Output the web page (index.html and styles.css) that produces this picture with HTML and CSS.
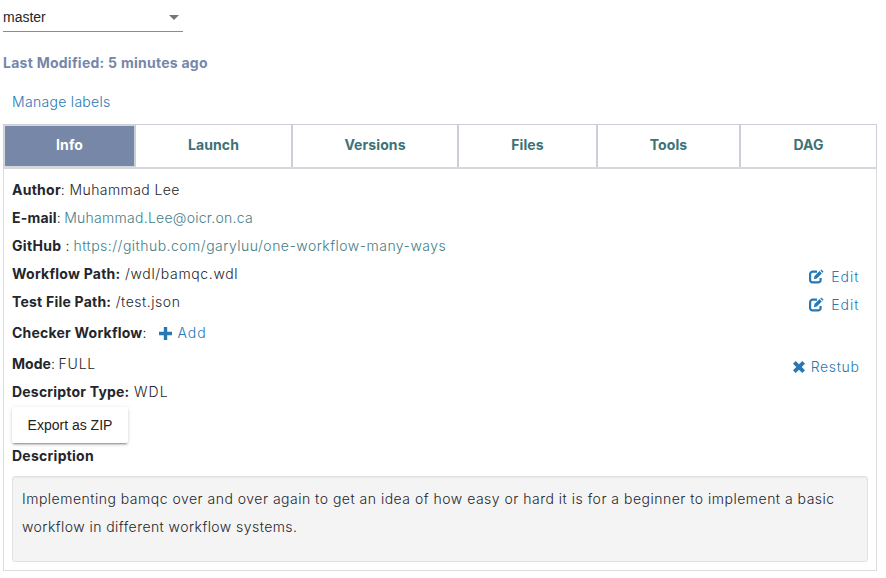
FILE: index.html
```html
<!DOCTYPE html>
<html lang="en">
<head>
<meta charset="utf-8">
<title>Workflow</title>
<link rel="stylesheet" href="styles.css">
</head>
<body>
<div class="select"><span>master</span><i class="caret"></i></div>
<div class="modified"><b class="ls-modified">Last Modified: 5 minutes ago</b></div>
<div class="labels"><a class="blue ls-manage">Manage labels</a></div>
<nav class="tabs">
  <a class="tab active"><b>Info</b></a>
  <a class="tab"><b>Launch</b></a>
  <a class="tab"><b>Versions</b></a>
  <a class="tab"><b>Files</b></a>
  <a class="tab"><b>Tools</b></a>
  <a class="tab"><b>DAG</b></a>
</nav>
<main class="panel">
  <div class="row"><b class="ls-author">Author</b><span class="ls-name">: Muhammad Lee</span></div>
  <div class="row"><b class="ls-email">E-mail</b><span class="colon">: </span><a class="teal ls-address">Muhammad.Lee@oicr.on.ca</a></div>
  <div class="row"><b class="ls-github">GitHub</b><span class="colon-wide"> : </span><a class="teal ls-url">https://github.com/garyluu/one-workflow-many-ways</a></div>
  <div class="row"><b class="ls-wpath">Workflow Path:</b><span class="gap ls-wdlpath">/wdl/bamqc.wdl</span><a class="action blue"><svg class="edit" viewBox="0 0 16 16"><path class="frame" d="M9 2.700H4.600a2.500 2.500 0 0 0-2.500 2.500v5.700a2.500 2.500 0 0 0 2.500 2.500h5.500a2.500 2.500 0 0 0 2.500-2.500V9"/><path d="M5.800 10.300l.7-3.200 5-5 2.300 2.300-5 5zM12.300 1.400l1-1 2.300 2.300-1 1z"/></svg><span class="ls-edit">Edit</span></a></div>
  <div class="row"><b class="ls-tpath">Test File Path:</b><span class="gap ls-json">/test.json</span><a class="action blue"><svg class="edit" viewBox="0 0 16 16"><path class="frame" d="M9 2.700H4.600a2.500 2.500 0 0 0-2.500 2.500v5.700a2.500 2.500 0 0 0 2.500 2.500h5.500a2.500 2.500 0 0 0 2.500-2.500V9"/><path d="M5.800 10.300l.7-3.200 5-5 2.300 2.300-5 5zM12.300 1.400l1-1 2.300 2.300-1 1z"/></svg><span class="ls-edit">Edit</span></a></div>
  <div class="row checker"><b class="ls-checker">Checker Workflow</b><span>:</span><a class="add blue"><svg class="plus" viewBox="0 0 13 13"><path d="M4.800 0h3.400v4.800H13v3.400H8.200V13H4.800V8.200H0V4.800h4.800z"/></svg><span class="ls-add">Add</span></a></div>
  <div class="row"><b class="ls-mode">Mode</b><span class="colon">: </span><span class="ls-full">FULL</span><a class="action blue"><svg class="cross" viewBox="0 0 12 12"><path d="M2.700 0L6 3.300 9.300 0 12 2.700 8.700 6 12 9.300 9.300 12 6 8.700 2.700 12 0 9.300 3.300 6 0 2.700z"/></svg><span class="ls-restub">Restub</span></a></div>
  <div class="row"><b class="ls-type">Descriptor Type:</b><span class="gap ls-wdl">WDL</span></div>
  <button class="export">Export as ZIP</button>
  <div class="heading"><b class="ls-desc">Description</b></div>
  <div class="well"><span class="ls-line1">Implementing bamqc over and over again to get an idea of how easy or hard it is for a beginner to implement a basic</span><br><span class="ls-line2">workflow in different workflow systems.</span></div>
</main>
</body>
</html>
```
FILE: styles.css
```css
* { box-sizing: border-box; }
body { margin: 0; padding: 0 9px 0 3px; background: #fff; color: #24262b; font: 350 14px/28px Inter, "Liberation Sans", sans-serif; }
b { font-weight: 700; }
svg { fill: currentColor; display: block; }

.select { width: 180px; height: 32px; border-bottom: 1px solid #8c8c8c; display: flex; justify-content: space-between; align-items: center; padding: 2px 4px 0 0; font: 14px/16px "Liberation Sans", sans-serif; }
.caret { margin-top: 2px; border: 5px solid transparent; border-top-color: #757575; border-bottom: 0; }
.modified { margin-top: 17px; color: #7687aa; }
.labels { padding: 11px 0 0 9px; height: 47px; }
.blue { color: #2778b3; }
.teal { color: #457e86; }

.tabs { display: grid; grid-template-columns: 132px 157px 166px 139px 143px 136px; width: 874px; height: 45px; border: 1px solid #cccfd8; border-width: 1px 0 2px 1px; border-bottom-color: #d8d8dc; }
.tab { color: #3c7278; text-align: center; line-height: 40px; letter-spacing: .1px; border-right: 2px solid #cccfd8; }
.tab:last-child { border-right-width: 1px; }
.active { background: #7687a8; color: #fff; border: 1px solid #d5d8df; border-right: 2px solid #cccfd8; line-height: 38px; }

.panel { width: 874px; height: 402px; padding: 7px 8px 8px; border: 1px solid #dcdcdc; border-top: 0; }
.row { display: flex; height: 28px; white-space: pre; }
.gap { margin-left: 4.500px; }
.colon { width: 7.500px; }
.colon-wide { width: 12px; }
.action { margin-left: auto; margin-right: 8.500px; display: flex; align-items: center; height: 34px; }
.checker { height: 34px; line-height: 34px; }
.add { display: flex; align-items: center; margin-left: 13px; }
.plus { width: 13px; height: 13px; margin-right: 5px; }
.edit { width: 16px; height: 16px; margin-right: 7px; }
.frame { fill: none; stroke: currentColor; stroke-width: 2.200; }
.cross { width: 12px; height: 12px; margin-right: 5.500px; }
.export { display: block; width: 116px; height: 36px; margin-top: 1px; padding: 0; border: 0; border-radius: 2px; background: #fff; color: #222; font: 14px/36px "Liberation Sans", sans-serif; box-shadow: 0 3px 1px -2px rgba(0,0,0,.2), 0 2px 2px rgba(0,0,0,.14), 0 1px 5px rgba(0,0,0,.12); }
.heading { height: 33px; line-height: 25px; }
.well { height: 86px; padding: 8px 9px; border: 1px solid #e1e1e1; border-radius: 3px; background: #f4f4f4; box-shadow: inset 0 1px 1px rgba(0,0,0,.05); white-space: nowrap; }

.ls-modified { letter-spacing: .26px; }
.ls-manage { letter-spacing: .3px; }
.ls-author { letter-spacing: .25px; }
.ls-name { letter-spacing: .4px; }
.ls-email { letter-spacing: .2px; }
.ls-address { letter-spacing: .26px; }
.ls-github { letter-spacing: .33px; }
.ls-url { letter-spacing: .48px; }
.ls-wpath { letter-spacing: .25px; }
.ls-wdlpath { letter-spacing: .65px; }
.ls-tpath { letter-spacing: .22px; }
.ls-json { letter-spacing: .53px; }
.ls-checker { letter-spacing: .22px; }
.ls-add { letter-spacing: 1px; }
.ls-edit { letter-spacing: 1px; }
.ls-mode { letter-spacing: .05px; }
.ls-full { letter-spacing: .8px; }
.ls-restub { letter-spacing: .65px; }
.ls-type { letter-spacing: .2px; }
.ls-wdl { letter-spacing: 1.100px; }
.ls-desc { letter-spacing: .25px; }
.ls-line1 { letter-spacing: .496px; }
.ls-line2 { letter-spacing: .44px; }
```
